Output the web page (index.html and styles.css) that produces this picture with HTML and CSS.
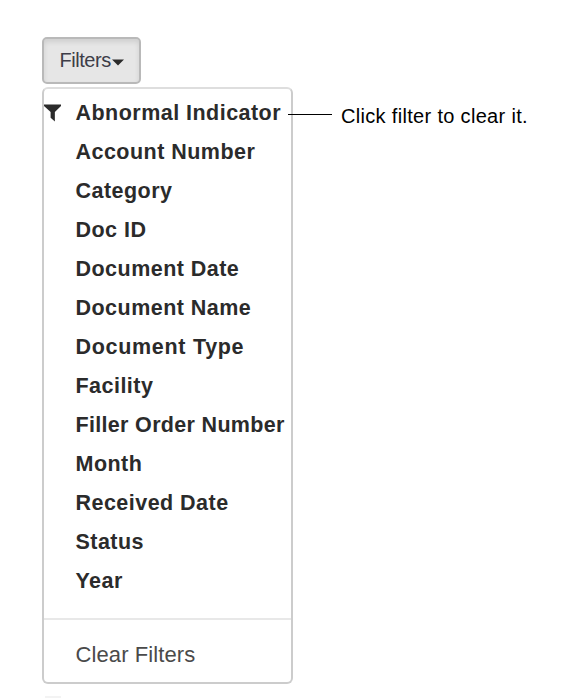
FILE: index.html
```
<!DOCTYPE html>
<html lang="en">
<head>
<meta charset="utf-8">
<title>Filters</title>
<link rel="stylesheet" href="styles.css">
</head>
<body>
<main class="page">
  <button class="toggle" type="button"><span>Filters</span><svg class="caret" viewBox="0 0 12 7"><path d="M0 .5h12L6 6.5z"/></svg></button>
  <div class="row">
    <div class="menu">
      <ul class="list">
        <li class="item"><svg class="funnel" viewBox="0 0 18 18"><path d="M0 0h18v1.5L11.5 8v10L7 14V8L0 1.5z"/></svg><span>Abnormal Indicator</span></li>
        <li class="item"><span>Account Number</span></li>
        <li class="item"><span>Category</span></li>
        <li class="item"><span>Doc ID</span></li>
        <li class="item"><span>Document Date</span></li>
        <li class="item"><span>Document Name</span></li>
        <li class="item wide"><span>Document Type</span></li>
        <li class="item"><span>Facility</span></li>
        <li class="item tight"><span>Filler Order Number</span></li>
        <li class="item"><span>Month</span></li>
        <li class="item"><span>Received Date</span></li>
        <li class="item"><span>Status</span></li>
        <li class="item"><span>Year</span></li>
      </ul>
      <div class="clear"><span>Clear Filters</span></div>
    </div>
    <div class="callout"><span class="line"></span><span class="note">Click filter to clear it.</span></div>
  </div>
  <div class="sliver"></div>
</main>
</body>
</html>
```
FILE: styles.css
```
* { box-sizing: border-box; }
body { margin: 0; background: #fff; font-family: "Liberation Sans", Arial, sans-serif; color: #2b2b2b; }
.page { height: 698px; padding: 37px 0 0 42px; overflow: hidden; }
.toggle {
  display: flex; align-items: center; width: 99px; height: 47px; padding: 0 0 0 15.5px;
  border: 2px solid #b9b9b9; border-radius: 5px; background: #e6e6e6;
  box-shadow: inset 0 3px 5px rgba(0,0,0,.1);
  font: 20px "Liberation Sans", Arial, sans-serif; letter-spacing: -.45px; color: #3d3d48;
}
.caret { width: 12px; height: 7px; margin: 4px 0 0 1px; fill: #2b2b2b; }
.row { display: flex; align-items: flex-start; margin-top: 3px; }
.menu {
  flex: none; width: 251px; height: 597px;
  border: 2px solid #ccc; border-top-color: #dedede; border-radius: 6px;
}
.list { margin: 0; padding: 5px 0 0; list-style: none; height: 529px; }
.item {
  position: relative; height: 39px; line-height: 39px; padding-left: 31.5px;
  font-size: 21.5px; font-weight: 700; letter-spacing: .47px; white-space: nowrap;
}
.item.tight { letter-spacing: .32px; }
.item.wide { letter-spacing: .7px; }
.funnel { position: absolute; left: 0; top: 10px; width: 17px; height: 18px; fill: #2b2b2b; }
.clear {
  height: 64px; padding: 2px 0 0 31.5px; border-top: 2px solid #e8e8e8;
  line-height: 66px; font-size: 22px; letter-spacing: .1px; color: #4a4a4a;
}
.callout { display: flex; align-items: center; height: 30px; margin: 12px 0 0 -5px; }
.line { position: relative; width: 44px; height: 1px; background: #000; margin-right: 9px; }
.note { font-size: 20px; letter-spacing: .32px; color: #000; white-space: nowrap; padding-top: 4px; }
.sliver { width: 16px; height: 2px; margin: 12px 0 0 3px; background: #f3f3f3; }
```
